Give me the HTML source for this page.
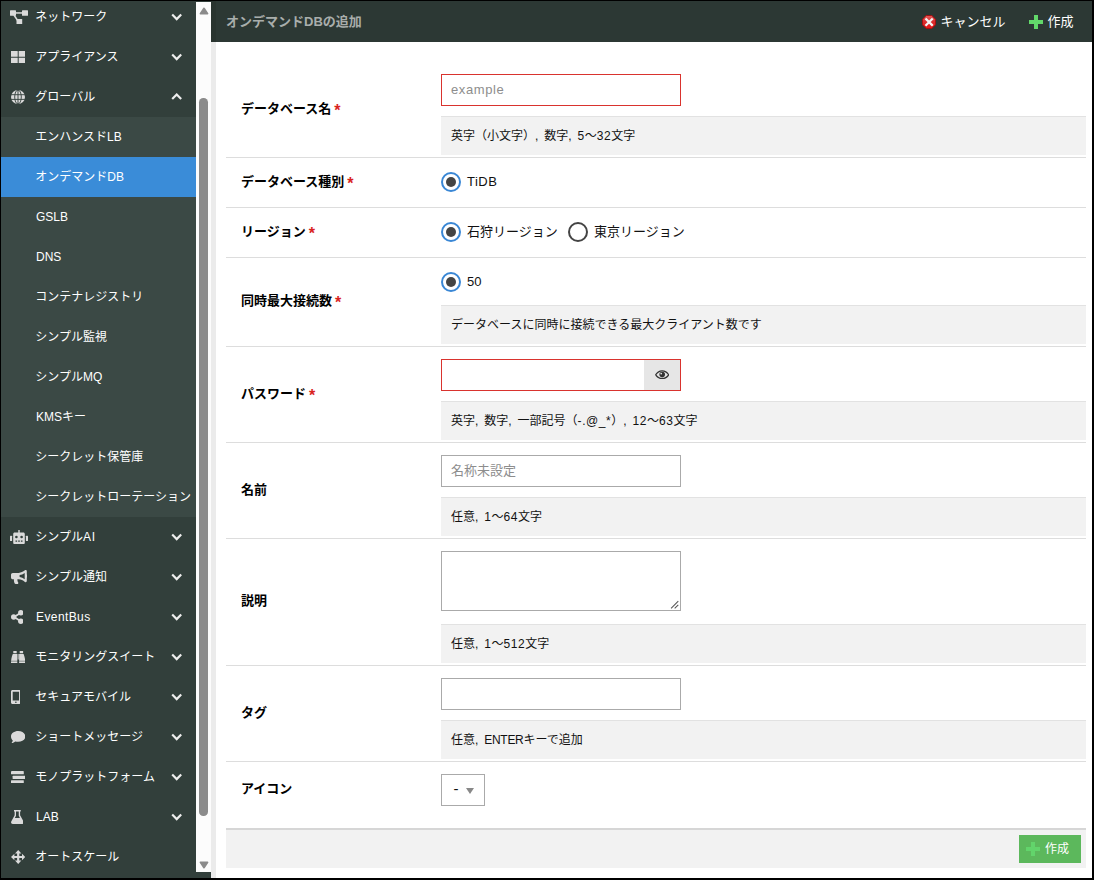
<!DOCTYPE html>
<html lang="ja">
<head>
<meta charset="utf-8">
<title>オンデマンドDBの追加</title>
<style>
*{box-sizing:border-box;margin:0;padding:0}
html,body{width:1094px;height:880px;overflow:hidden;background:#000}
body{position:relative;font-family:"Liberation Sans","Noto Sans CJK JP",sans-serif;font-size:13px;color:#000}
#frame{position:absolute;left:1px;top:1px;width:1091px;height:877px;overflow:hidden;background:#fff}
#side{position:absolute;left:0;top:0;width:210px;height:877px;background:#323f3b;overflow:hidden;color:#fff;font-size:12px}
#side .it{position:absolute;left:0;width:195px;height:40px;line-height:40px;padding-left:35px;white-space:nowrap}
#side .sub{background:#3b4945}
#side .sel{background:#3a8cd8}
#side svg.ic{position:absolute;fill:#dadada}
#side svg.ch{position:absolute;left:170.400px;top:16px;width:11.400px;height:8px;fill:none;stroke:#eee;stroke-width:2.150}
#sb{position:absolute;left:195px;top:1px;width:15px;height:870px;background:#fcfcfc}
#sb .thumb{position:absolute;left:3.300px;top:96px;width:8.500px;height:718px;border-radius:4.250px;background:#8b8b8b}
#sb svg{position:absolute;left:2.500px;width:10px;height:8px;fill:#8b8b8b;stroke:#8b8b8b;stroke-width:1.600;stroke-linejoin:round}
#hdr{position:absolute;left:210px;top:0;width:881px;height:41px;background:#2c3834;color:#fff}
#hdr .shade{position:absolute;left:0;top:0;width:5px;height:41px;background:#29342f}
#hdr .title{position:absolute;left:15px;top:0;line-height:41px;font-weight:bold;color:#a9aeac;font-size:13px;white-space:nowrap}
#hdr .btn{position:absolute;top:0;height:41px;line-height:41px;font-size:13px;white-space:nowrap;color:#fff}
#hdr .btn svg{position:absolute;left:0;top:14px;width:14px;height:14px}
#hdr .btn svg.plus{fill:#62d86a}
#hdr .btn span{margin-left:18.500px}
#strip{position:absolute;left:210px;top:41px;width:5px;height:836px;background:#ebebeb}
#main{position:absolute;left:215px;top:41px;width:876px;height:836px;background:#fff}
.sep{position:absolute;left:10px;width:860px;height:1px;background:#ddd}
.lbl{position:absolute;left:25px;font-weight:bold;font-size:13px;line-height:20px;white-space:nowrap}
.lbl i{font-style:normal;color:#d9231e;font-weight:normal;font-size:13px;margin-left:3px;position:relative;top:-1px}
.inp{position:absolute;left:225px;width:240px;height:32px;border:1px solid #aaa;background:#fff;font-size:13px;line-height:30px;padding-left:9px;color:#8d8d8d;white-space:nowrap}
.inp.req{border-color:#d9332e}
.inp.ta{height:60px}
.inp.ta svg{position:absolute;right:1px;bottom:1px;width:9px;height:9px;stroke:#555;stroke-width:1.150;fill:none}
.eye{position:absolute;right:0;top:0;width:36px;height:30px;background:#e6e6e6}
.eye svg{position:absolute;left:10.700px;top:9.700px;width:14.400px;height:9.600px;fill:#333}
.hint{position:absolute;left:225px;width:645px;height:39px;background:#f2f2f2;border-top:1px solid #e2e2e2;font-size:12px;line-height:38px;padding-left:10px;white-space:nowrap;color:#111}
.radio{position:absolute;width:20px;height:20px;border-radius:50%;border:2px solid #3a87d5;background:#fff}
.radio.on:after{content:"";position:absolute;left:3px;top:3px;width:10px;height:10px;border-radius:50%;background:#444}
.radio.off{border-color:#444}
.rl{position:absolute;font-size:13px;line-height:20px;white-space:nowrap;color:#111}
.selbox{position:absolute;left:225px;width:44px;height:32px;border:1px solid #aaa;background:#fff;font-size:13px;line-height:30px;color:#111}
.selbox span{position:absolute;left:11.500px;top:-1px;font-size:15px}
.selbox b{position:absolute;left:23.800px;top:12.500px;width:0;height:0;border-left:4.700px solid transparent;border-right:4.700px solid transparent;border-top:6.500px solid #888}
#foot{position:absolute;left:10px;top:786px;width:860px;height:40px;background:#f2f2f2;border-top:2px solid #d6d6d6}
#foot .go{position:absolute;left:793px;top:5px;width:62px;height:28px;background:#5cb85c;color:#fff;font-size:12px;line-height:28px;white-space:nowrap;padding-left:26px}
#foot .go svg{position:absolute;left:7px;top:7px;width:14px;height:14px;fill:#62d46b}
.hint .a{letter-spacing:.55px;word-spacing:1.500px}
.rl .a{letter-spacing:.5px}
#side .a{letter-spacing:.4px}
.lbl i{left:0;top:3px;font-size:16px;line-height:10px}
.inp .a{letter-spacing:.6px}
.lbl i{font-weight:bold}
#side .it.k{padding-left:34.300px}
</style>
</head>
<body>
<div id="frame">
<div id="side">
<div class="it k" style="top:-4px"><svg class="ic" style="left:9.4px;top:12.75px;width:18px;height:14.5px" viewBox="0 0 18 14.5"><rect x="0" y="0.200" width="6" height="5.600" rx=".5"/><rect x="12" y="0.200" width="6" height="5.600" rx=".5"/><rect x="6.500" y="9" width="5.700" height="5.500" rx=".5"/><rect x="5" y="2.200" width="8" height="1.500"/><path d="M3.300 5.400l1.300-.8 3.600 5.400-1.300.8z"/></svg>ネットワーク<svg class="ch" viewBox="0 0 11.400 8"><path d="M1.200 1.500L5.700 6.100L10.200 1.500"/></svg></div>
<div class="it k" style="top:36px"><svg class="ic" style="left:9.65px;top:13.75px;width:14.4px;height:12.5px" viewBox="0 0 14.4 12.5"><rect x="0" y="0" width="6.700" height="5.750"/><rect x="7.700" y="0" width="6.700" height="5.750"/><rect x="0" y="6.750" width="6.700" height="5.750"/><rect x="7.700" y="6.750" width="6.700" height="5.750"/></svg>アプライアンス<svg class="ch" viewBox="0 0 11.400 8"><path d="M1.200 1.500L5.700 6.100L10.200 1.500"/></svg></div>
<div class="it k" style="top:76px"><svg class="ic" style="left:9.65px;top:13px;width:14px;height:14px" viewBox="0 0 14 14"><circle cx="7" cy="7" r="7"/><g fill="none" stroke="#323f3b" stroke-width=".9"><path d="M0 4.700h14M0 9.400h14M7 0v14"/><ellipse cx="7" cy="7" rx="3.300" ry="7"/></g></svg>グローバル<svg class="ch" style="top:15.500px" viewBox="0 0 11.400 8"><path d="M1.200 6.100L5.700 1.500L10.200 6.100"/></svg></div>
<div class="it sub k" style="top:116px">エンハンスドLB</div>
<div class="it sub sel k" style="top:156px">オンデマンドDB</div>
<div class="it sub" style="top:196px">GSLB</div>
<div class="it sub" style="top:236px">DNS</div>
<div class="it sub k" style="top:276px">コンテナレジストリ</div>
<div class="it sub k" style="top:316px">シンプル監視</div>
<div class="it sub k" style="top:356px">シンプルMQ</div>
<div class="it sub" style="top:396px">KMSキー</div>
<div class="it sub k" style="top:436px">シークレット保管庫</div>
<div class="it sub k" style="top:476px">シークレットローテーション</div>
<div class="it k" style="top:516px"><svg class="ic" style="left:9.4px;top:13px;width:18px;height:14.25px" viewBox="0 0 18 14.25"><path fill-rule="evenodd" d="M8.300 0h1.400v2.600h3.600c.9 0 1.500.6 1.500 1.500v8.650c0 .9-.6 1.500-1.500 1.500H4.700c-.9 0-1.500-.6-1.500-1.500V4.100c0-.9.600-1.500 1.500-1.500h3.600zM6.400 5.700a1.300 1.300 0 1 0 0 2.600 1.300 1.300 0 0 0 0-2.600zm5.200 0a1.300 1.300 0 1 0 0 2.600 1.300 1.300 0 0 0 0-2.600zM5.500 10.400v1.300h1.600v-1.300zm2.700 0v1.300h1.600v-1.300zm2.700 0v1.300h1.600v-1.300z"/><rect x="0" y="5.700" width="2.100" height="5.400" rx=".6"/><rect x="15.900" y="5.700" width="2.100" height="5.400" rx=".6"/></svg>シンプル<span style="letter-spacing:.8px">AI</span><svg class="ch" viewBox="0 0 11.400 8"><path d="M1.200 1.500L5.700 6.100L10.200 1.500"/></svg></div>
<div class="it k" style="top:556px"><svg class="ic" style="left:9.65px;top:13px;width:16px;height:14px" viewBox="0 0 16 14"><path fill-rule="evenodd" d="M14.600 0c.7 0 1.200.5 1.200 1.100v3.500c.5.300.8.900.8 1.500s-.3 1.200-.8 1.500v3.500c0 .6-.5 1.100-1.200 1.100-.300 0-.500-.1-.700-.3-1.900-1.500-3.900-2.400-6.200-2.600H6.400c-.1 1.200.2 2.300.8 3.200.4.600 0 1.500-.8 1.500H4.600c-.4 0-.7-.2-.9-.5-.6-1.200-.9-2.600-.8-4.200H1.800C.800 9.300 0 8.500 0 7.500V4.700c0-1 .8-1.800 1.800-1.800h5.900c2.300-.2 4.300-1.100 6.200-2.600.2-.2.400-.3.700-.3zM13.700 2.900c-1.600 1.200-3.300 1.900-5.100 2.200v2c1.800.3 3.500 1 5.100 2.200z"/></svg>シンプル通知<svg class="ch" viewBox="0 0 11.400 8"><path d="M1.200 1.500L5.700 6.100L10.200 1.500"/></svg></div>
<div class="it" style="top:596px"><svg class="ic" style="left:9.9px;top:13px;width:12.5px;height:14px" viewBox="0 0 12.5 14"><circle cx="9.800" cy="2.700" r="2.700"/><circle cx="9.800" cy="11.300" r="2.700"/><circle cx="2.700" cy="7" r="2.700"/><path d="M3 6l6.400-3.900.9 1.500L3.900 7.500zM3.900 6.500l6.400 3.900-.9 1.500L3 8z"/></svg><span class="a">EventBus</span><svg class="ch" viewBox="0 0 11.400 8"><path d="M1.200 1.500L5.700 6.100L10.200 1.500"/></svg></div>
<div class="it k" style="top:636px"><svg class="ic" style="left:9.65px;top:13.75px;width:14.4px;height:12.5px" viewBox="0 0 14.4 12.5"><path d="M2.300 0h3.400v2.300H2.300zM8.700 0h3.400v2.300H8.700zM1.800 3h4.500v9.500H0c0-3.400.6-6.600 1.800-9.500zM8.100 3h4.500c1.200 2.900 1.800 6.100 1.800 9.500H8.100zM6.800 3h.8v5.600h-.8z"/><rect x="0" y="9.700" width="14.400" height=".9" fill="#323f3b" opacity=".55"/></svg>モニタリングスイート<svg class="ch" viewBox="0 0 11.400 8"><path d="M1.200 1.500L5.700 6.100L10.200 1.500"/></svg></div>
<div class="it k" style="top:676px"><svg class="ic" style="left:9.65px;top:13px;width:9.75px;height:14px" viewBox="0 0 9.75 14"><path fill-rule="evenodd" d="M1.500 0h6.750c.8 0 1.500.7 1.500 1.500v11c0 .8-.7 1.500-1.500 1.500H1.500C.700 14 0 13.300 0 12.500v-11C0 .700.700 0 1.500 0zm.200 1.800v8.800h6.350V1.800zM4.875 11.400a.8.800 0 1 0 0 1.600.8.800 0 0 0 0-1.600z"/></svg>セキュアモバイル<svg class="ch" viewBox="0 0 11.400 8"><path d="M1.200 1.500L5.700 6.100L10.200 1.500"/></svg></div>
<div class="it k" style="top:716px"><svg class="ic" style="left:9.65px;top:13.75px;width:14.4px;height:12.5px" viewBox="0 0 14.4 12.5"><path d="M7.200 0c4 0 7.200 2.400 7.200 5.400s-3.200 5.400-7.200 5.400c-1 0-2-.2-2.900-.4-.9.800-2.300 1.700-4.100 2 .8-.9 1.400-1.900 1.600-3C.700 8.400 0 7 0 5.400 0 2.400 3.200 0 7.200 0z"/></svg>ショートメッセージ<svg class="ch" viewBox="0 0 11.400 8"><path d="M1.200 1.500L5.700 6.100L10.200 1.500"/></svg></div>
<div class="it k" style="top:756px"><svg class="ic" style="left:9.65px;top:13.75px;width:14.4px;height:12.5px" viewBox="0 0 14.4 12.5"><rect x="0" y="0" width="12.800" height="3.300" rx=".5"/><rect x="1.600" y="4.700" width="12.800" height="3.200" rx=".5"/><rect x="0" y="9.300" width="12.800" height="3.200" rx=".5"/></svg>モノプラットフォーム<svg class="ch" viewBox="0 0 11.400 8"><path d="M1.200 1.500L5.700 6.100L10.200 1.500"/></svg></div>
<div class="it" style="top:796px"><svg class="ic" style="left:9.65px;top:13px;width:12.75px;height:14px" viewBox="0 0 12.75 14"><path fill-rule="evenodd" d="M3 0h6.750v1.500H9.100v3.800l3.400 6.100c.6 1.200-.2 2.600-1.500 2.600H1.750C.450 14-.350 12.600.250 11.400l3.400-6.100V1.500H3zm2 1.500v4.200L3.800 8h5.150L7.750 5.700V1.500z"/></svg>LAB<svg class="ch" viewBox="0 0 11.400 8"><path d="M1.200 1.500L5.700 6.100L10.200 1.500"/></svg></div>
<div class="it k" style="top:836px"><svg class="ic" style="left:9.65px;top:13px;width:14.4px;height:14px" viewBox="0 0 14.4 14"><path d="M7.200 0L10.400 3.400H8.300V5.900H11V3.800L14.400 7L11 10.200V8.100H8.300V10.600H10.400L7.200 14L4 10.600H6.100V8.100H3.400V10.200L0 7L3.400 3.800V5.900H6.100V3.400H4z"/></svg>オートスケール</div>
</div>
<div id="sb"><svg style="top:4.500px" viewBox="0 0 10 8"><path d="M5 1.300L8.600 6.700H1.400z"/></svg><div class="thumb"></div><svg style="top:858.500px" viewBox="0 0 10 8"><path d="M5 6.700L8.600 1.300H1.400z"/></svg></div>
<div id="hdr"><div class="shade"></div><div class="title">オンデマンドDBの追加</div><div class="btn" style="left:711px"><svg class="cx" viewBox="0 0 14 14"><defs><linearGradient id="cg" x1="0" y1="0" x2="0" y2="1"><stop offset="0" stop-color="#e65a5a"/><stop offset=".5" stop-color="#d92c2c"/><stop offset="1" stop-color="#e81414"/></linearGradient></defs><path d="M4.200 .5h5.600L13.500 4.200v5.600L9.800 13.500H4.200L.5 9.800V4.200z" fill="url(#cg)" stroke="#a40f0f" stroke-width="1"/><path d="M4.300 4.300l5.600 5.600M9.900 4.300L4.300 9.900" stroke="#f4f4f4" stroke-width="2.300" stroke-linecap="square" fill="none"/></svg><span>キャンセル</span></div><div class="btn" style="left:818px"><svg class="plus" viewBox="0 0 14 14"><path d="M5 0h4v5h5v4H9v5H5V9H0V5h5z"/></svg><span>作成</span></div></div>
<div id="strip"></div>
<div id="main">
<div class="lbl" style="top:57px">データベース名<i>*</i></div>
<div class="inp req" style="top:32px"><span class="a">example</span></div>
<div class="hint" style="top:74px">英字（小文字）<span class="a">, </span>数字<span class="a">, 5</span>～<span class="a">32</span>文字</div>
<div class="sep" style="top:115px"></div>
<div class="lbl" style="top:130px">データベース種別<i>*</i></div>
<div class="radio on" style="left:225px;top:130px"></div>
<div class="rl" style="left:251px;top:130px"><span class="a">TiDB</span></div>
<div class="sep" style="top:165px"></div>
<div class="lbl" style="top:180px">リージョン<i>*</i></div>
<div class="radio on" style="left:225px;top:180px"></div>
<div class="rl" style="left:251px;top:180px">石狩リージョン</div>
<div class="radio off" style="left:352px;top:180px"></div>
<div class="rl" style="left:378px;top:180px">東京リージョン</div>
<div class="sep" style="top:215px"></div>
<div class="lbl" style="top:249px">同時最大接続数<i>*</i></div>
<div class="radio on" style="left:225px;top:230px"></div>
<div class="rl" style="left:251px;top:230px">50</div>
<div class="hint" style="top:263px">データベースに同時に接続できる最大クライアント数です</div>
<div class="sep" style="top:304px"></div>
<div class="lbl" style="top:342px">パスワード<i>*</i></div>
<div class="inp req" style="top:317px"><div class="eye"><svg viewBox="0 0 16 10"><path fill-rule="evenodd" d="M8 0C4.500 0 1.600 2 0 5c1.600 3 4.500 5 8 5s6.400-2 8-5c-1.600-3-4.500-5-8-5zm0 1.400c2.700 0 5 1.400 6.400 3.600C13 7.200 10.700 8.600 8 8.600S3 7.200 1.600 5C3 2.800 5.300 1.400 8 1.400z"/><circle cx="8" cy="4.800" r="3.100"/><circle cx="6.900" cy="3.600" r="1" fill="#e6e6e6"/></svg></div></div>
<div class="hint" style="top:359px">英字<span class="a">, </span>数字<span class="a">, </span>一部記号（<span class="a">-.@_*</span>）<span class="a">, 12</span>～<span class="a">63</span>文字</div>
<div class="sep" style="top:400px"></div>
<div class="lbl" style="top:438px">名前</div>
<div class="inp" style="top:413px">名称未設定</div>
<div class="hint" style="top:455px">任意<span class="a">, 1</span>～<span class="a">64</span>文字</div>
<div class="sep" style="top:496px"></div>
<div class="lbl" style="top:549px">説明</div>
<div class="inp ta" style="top:509px"><svg viewBox="0 0 10 10"><path d="M1.200 9.300l8-8M5.200 9.300l4-4"/></svg></div>
<div class="hint" style="top:582px">任意<span class="a">, 1</span>～<span class="a">512</span>文字</div>
<div class="sep" style="top:623px"></div>
<div class="lbl" style="top:661px">タグ</div>
<div class="inp" style="top:636px"></div>
<div class="hint" style="top:678px">任意<span class="a">, </span><span style="letter-spacing:-.3px">ENTER</span>キーで追加</div>
<div class="sep" style="top:719px"></div>
<div class="lbl" style="top:737px">アイコン</div>
<div class="selbox" style="top:732px"><span>-</span><b></b></div>
<div id="foot"><div class="go"><svg class="plus" viewBox="0 0 14 14"><path d="M5 0h4v5h5v4H9v5H5V9H0V5h5z"/></svg>作成</div></div>
</div>
</div>
</body>
</html>
